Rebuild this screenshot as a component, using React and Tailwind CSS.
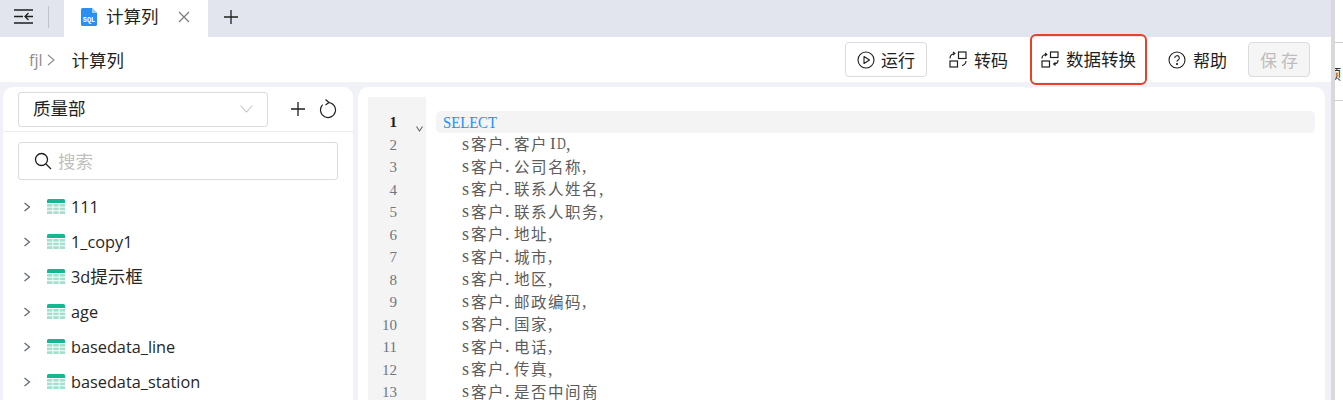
import React from "react";

const sans = "font-['Noto_Sans_CJK_SC','Noto_Sans',sans-serif]";

const TableIcon = () => (
  <svg width="18" height="16" viewBox="0 0 18 16" className="shrink-0">
    <path d="M0 1.5A1.5 1.5 0 0 1 1.5 0h15A1.5 1.5 0 0 1 18 1.5V4H0z" fill="#14b78f" />
    <g fill="#a3e0cf">
      <rect x="0" y="5" width="5.4" height="2.6" />
      <rect x="6.3" y="5" width="5.4" height="2.6" />
      <rect x="12.6" y="5" width="5.4" height="2.6" />
      <rect x="0" y="8.6" width="5.4" height="2.6" />
      <rect x="6.3" y="8.6" width="5.4" height="2.6" />
      <rect x="12.6" y="8.6" width="5.4" height="2.6" />
      <rect x="0" y="12.2" width="5.4" height="2.8" />
      <rect x="6.3" y="12.2" width="5.4" height="2.8" />
      <rect x="12.6" y="12.2" width="5.4" height="2.8" />
    </g>
  </svg>
);

const Chevron = () => (
  <svg width="8" height="10" viewBox="0 0 8 10" fill="none" stroke="#5c6470" strokeWidth="1.2" className="shrink-0">
    <path d="M1.5 1l5 4-5 4" />
  </svg>
);

const TreeRow = ({ label }) => (
  <div className="h-[35px] flex items-center pl-[20px]">
    <Chevron />
    <span className="w-[16px]" />
    <TableIcon />
    <span className="ml-[6px] pt-[1px] text-[16.3px] text-[#262626] leading-none font-['Open_Sans','Noto_Sans_CJK_SC',sans-serif]">{label}</span>
  </div>
);

const latinClass = (c) => {
  if (c === "D") return "inline-block w-[9px] scale-x-[0.72] origin-left text-[17px] leading-none font-['Liberation_Serif',serif]";
  if (c === "I") return "inline-block w-[9px] pl-[2px] text-[17px] leading-none font-['Liberation_Serif',serif]";
  return "inline-block w-[9px] text-[18px] leading-none font-['Liberation_Serif',serif]";
};

const CodeText = ({ text }) => (
  <span className="pl-[26px] pb-[2px] text-[#5c5c5c] whitespace-pre flex items-center">
    {Array.from(text).map((c, i) =>
      /[\u4e00-\u9fff]/.test(c) ? (
        <span key={i} className="inline-block w-[17px] text-[15.5px] leading-none font-['Noto_Sans_CJK_SC',sans-serif]">{c}</span>
      ) : (
        <span key={i} className={latinClass(c)}>{c}</span>
      )
    )}
  </span>
);

const CodeLine = ({ n, text }) => (
  <div className="h-[22.5px] flex items-center">
    <span className="w-[29px] text-right text-[15px] text-[#6e7781] font-['Liberation_Serif',serif]">{n}</span>
    <span className="w-[39px]" />
    <CodeText text={text} />
  </div>
);

const lines = [
  "客户ID,", "公司名称,", "联系人姓名,", "联系人职务,", "地址,", "城市,", "地区,",
  "邮政编码,", "国家,", "电话,", "传真,", "是否中间商",
];

export default function App() {
  return (
    <div className={`w-[1343px] h-[400px] overflow-hidden flex bg-white text-[#1f1f1f] ${sans}`}>
      <div className="w-[1331px] shrink-0 flex flex-col bg-[#f0f2f7] overflow-hidden">
        <div className="h-[37px] shrink-0 bg-[#e2e5ee] flex items-stretch">
          <div className="w-[64px] flex items-center pl-[14px] pb-[4px]">
            <svg width="20" height="15" viewBox="0 0 20 15" fill="none" stroke="#1f1f1f" strokeWidth="1.3">
              <path d="M0 1h19M0 14h19M0 7.500h9M19 7.500h-8M14.500 4L11 7.500l3.500 3.500" />
            </svg>
            <span className="ml-[14px] w-px h-[22px] bg-[#bfc2c9]" />
          </div>
          <div className="w-[144px] bg-white flex items-center pl-[17px] pb-[4px]">
            <svg width="16" height="18" viewBox="0 0 16 18">
              <path d="M1.5 0H11l5 5v11.5a1.5 1.5 0 0 1-1.5 1.5h-13A1.5 1.5 0 0 1 0 16.5v-15A1.5 1.5 0 0 1 1.5 0z" fill="#2b8ff0" />
              <path d="M11 0l5 5h-5z" fill="#9dcdfa" />
              <text x="8" y="14" textAnchor="middle" fontSize="7" fontWeight="700" fill="#fff" fontFamily="Liberation Mono">SQL</text>
            </svg>
            <span className="ml-[9px] mb-[1px] text-[17.5px] leading-none">计算列</span>
            <svg width="12" height="12" viewBox="0 0 12 12" stroke="#7a7a7a" strokeWidth="1.2" className="ml-[19px]">
              <path d="M1 1l10 10M11 1L1 11" />
            </svg>
          </div>
          <div className="flex items-center pl-[15px] pb-[4px]">
            <svg width="16" height="16" viewBox="0 0 16 16" stroke="#1f1f1f" strokeWidth="1.3">
              <path d="M8 1v14M1 8h14" />
            </svg>
          </div>
        </div>

        <div className="h-[45px] shrink-0 bg-white flex items-center pl-[29px] pr-[21px]">
          <span className="text-[16px] text-[#8c8c8c] font-['Open_Sans',sans-serif]">fjl</span>
          <svg width="8" height="12" viewBox="0 0 8 12" fill="none" stroke="#8c8c8c" strokeWidth="1.1" className="ml-[5px]">
            <path d="M1 1l6 5-6 5" />
          </svg>
          <span className="ml-[16px] text-[17.5px] text-[#1f1f1f] leading-none">计算列</span>
          <div className="ml-auto flex items-center">
            <button className="w-[82px] h-[35px] border border-[#dcdcdc] rounded-[4px] flex items-center justify-center gap-[6px] text-[17px]">
              <svg width="18" height="18" viewBox="0 0 18 18" fill="none" stroke="#1f1f1f" strokeWidth="1.1">
                <circle cx="9" cy="9" r="8" />
                <path d="M7 5.500v7l5.500-3.500z" strokeLinejoin="round" />
              </svg>
              运行
            </button>
            <div className="ml-[22px] flex items-center gap-[7px] text-[17px]">
              <svg width="18" height="17" viewBox="0 0 18 17" fill="none" stroke="#1f1f1f" strokeWidth="1.2">
                <rect x="9.500" y="1" width="7.500" height="6.500" />
                <rect x="1" y="10" width="7.500" height="6" />
                <path d="M1 7.500C1 4.500 2.500 3 5.500 2.500M4 1l1.800 1.500L4 4M17 10c-.3 2.500-1.500 4-4 4.500" />
              </svg>
              转码
            </div>
            <div className="ml-[22px] w-[117px] h-[51px] border-2 border-[#e8402a] rounded-[6px] flex items-center justify-center gap-[7px] text-[17.5px]">
              <svg width="18" height="17" viewBox="0 0 18 17" fill="none" stroke="#1f1f1f" strokeWidth="1.2">
                <rect x="9.500" y="1" width="7.500" height="5.500" />
                <rect x="1" y="10" width="7.500" height="6" />
                <path d="M1 7.500C1 4.500 2.500 3.500 5.500 3.500M4 2l1.800 1.500L4 5M17 9c0 3-1.500 4-4 4M14.500 11.500L12.700 13l1.800 1.500" />
              </svg>
              数据转换
            </div>
            <div className="ml-[21px] flex items-center gap-[7px] text-[17px]">
              <svg width="18" height="18" viewBox="0 0 18 18" fill="none" stroke="#1f1f1f" strokeWidth="1.1">
                <circle cx="9" cy="9" r="8" />
                <path d="M6.700 7a2.300 2.300 0 1 1 3.400 2c-.8.450-1.100.9-1.100 1.700" />
                <circle cx="9" cy="13" r="0.500" fill="#1f1f1f" />
              </svg>
              帮助
            </div>
            <button className="ml-[21px] w-[62px] h-[35px] border border-[#dcdcdc] bg-[#f5f5f5] rounded-[4px] text-[17px] text-[#bdbdbd]">保 存</button>
          </div>
        </div>

        <div className="flex-1 flex pt-[5px] pl-[3px] pr-[6px] gap-[5px] min-h-0">
          <div className="w-[350px] shrink-0 bg-white rounded-t-[10px] overflow-hidden">
            <div className="h-[45px] pt-[5px] pl-[15px] flex items-start border-b border-[#ebebeb]">
              <div className="w-[250px] h-[35px] border border-[#dcdcdc] rounded-[3px] flex items-center pl-[14px] pr-[14px] pb-[2px] text-[17.5px]">
                质量部
                <svg width="13" height="8" viewBox="0 0 13 8" fill="none" stroke="#c4c4c4" strokeWidth="1.1" className="ml-auto">
                  <path d="M.5.500l6 6.500 6-6.500" />
                </svg>
              </div>
              <svg width="16" height="16" viewBox="0 0 16 16" stroke="#1f1f1f" strokeWidth="1.3" className="ml-[22px] mt-[9px]">
                <path d="M8 1v14M1 8h14" />
              </svg>
              <svg width="18" height="20" viewBox="0 0 18 20" fill="none" stroke="#1f1f1f" strokeWidth="1.2" className="ml-[13px] mt-[7px]">
                <path d="M9 3.500A7.500 7.500 0 1 1 3.700 5.700M6.500 .5L10 3.500 6.500 6" />
              </svg>
            </div>
            <div className="pl-[15px] pt-[10px]">
              <div className="w-[320px] h-[38px] border border-[#dcdcdc] rounded-[3px] flex items-center pl-[15px] text-[17.5px] text-[#bfbfbf]">
                <svg width="18" height="18" viewBox="0 0 18 18" fill="none" stroke="#1f1f1f" strokeWidth="1.3" className="mr-[6px]">
                  <circle cx="7.500" cy="7.500" r="6" />
                  <path d="M12 12l5 5" />
                </svg>
                搜索
              </div>
            </div>
            <div className="pt-[9px]">
              <TreeRow label="111" />
              <TreeRow label="1_copy1" />
              <TreeRow label={<>3d<span className="text-[17.5px]">提示框</span></>} />
              <TreeRow label="age" />
              <TreeRow label="basedata_line" />
              <TreeRow label="basedata_station" />
            </div>
          </div>

          <div className="flex-1 bg-white rounded-t-[10px] overflow-hidden pt-[10px] pl-[10px] pr-[10px]">
            <div className="relative h-[400px]">
              <div className="absolute left-0 top-0 bottom-0 w-[58px] bg-[#f4f4f4]" />
              <div className="absolute left-[68px] top-[14px] right-0 h-[22px] bg-[#f4f4f4] rounded-[5px]" />
              <div className="relative pt-[14px]">
                <div className="h-[22.5px] flex items-center">
                  <span className="w-[29px] text-right text-[15px] font-bold text-[#1f1f1f] font-['Liberation_Serif',serif]">1</span>
                  <span className="w-[39px] relative">
                    <svg width="7" height="6" viewBox="0 0 7 6" fill="none" stroke="#666" strokeWidth="1.1" className="absolute left-[19px] top-[4px]">
                      <path d="M.5.500l3 4.500 3-4.500" />
                    </svg>
                  </span>
                  <span className="ml-[7px] text-[17.5px] leading-none text-[#1890ff] scale-x-[0.84] origin-left font-['Liberation_Serif',serif]">SELECT</span>
                </div>
                {lines.map((t, i) => (
                  <CodeLine key={i} n={i + 2} text={"s客户." + t} />
                ))}
              </div>
            </div>
          </div>
        </div>
      </div>

      <div className="w-[4px] shrink-0 bg-[#d9d9d9]" />
      <div className="flex-1 relative overflow-hidden text-[14px] text-[#333]">
        <div className="h-[43px] border-b border-[#cfcfcf]" />
        <div className="h-[58px] border-b border-[#cfcfcf] flex items-center -ml-[8px] pt-[4px]">预</div>
      </div>
    </div>
  );
}
